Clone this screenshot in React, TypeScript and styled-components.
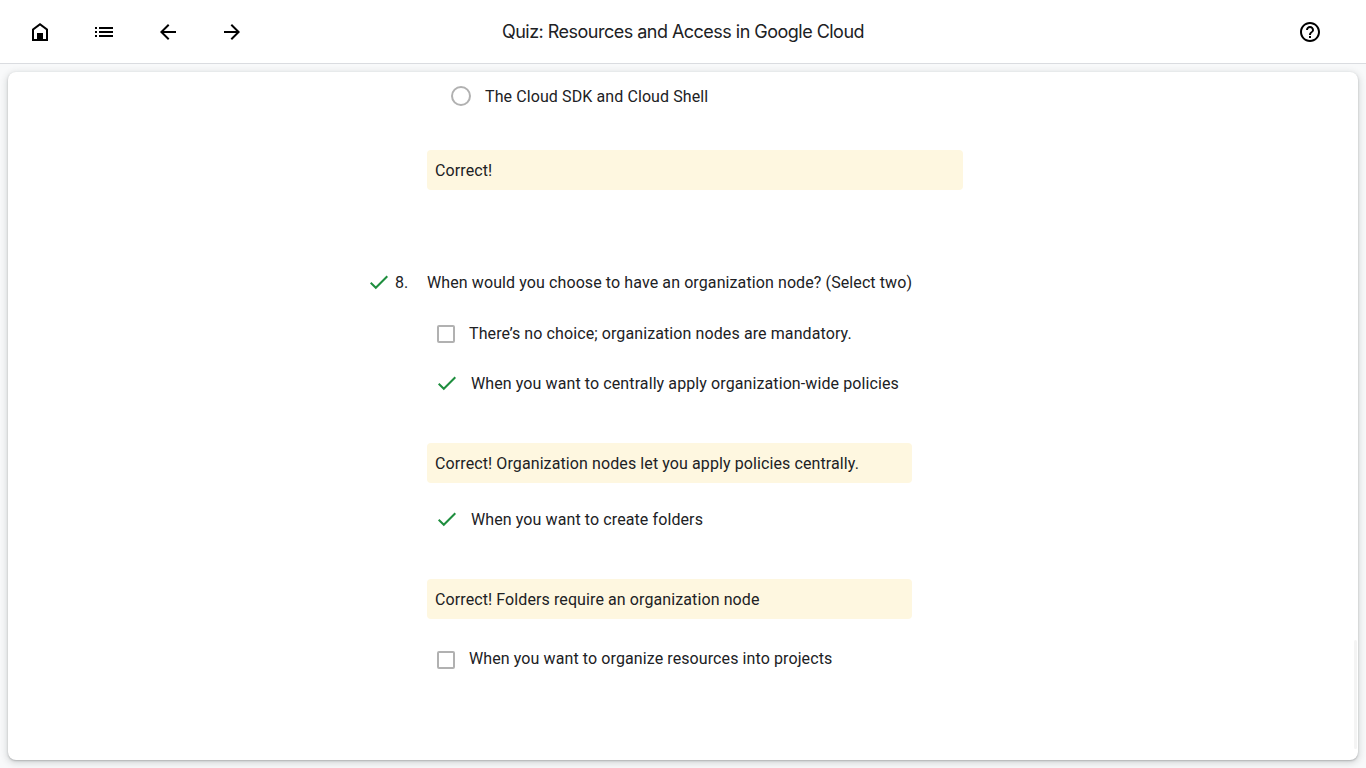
import React from "react";
import styled, { createGlobalStyle } from "styled-components";

const GlobalStyle = createGlobalStyle`
  * { box-sizing: border-box; }
  html, body, #root { height: 100%; }
  body {
    margin: 0;
    background: #f8f9fa;
    color: #202124;
    font-family: Roboto, "Liberation Sans", sans-serif;
    font-size: 16px;
    line-height: 24px;
    letter-spacing: 0.1px;
    overflow: hidden;
  }
`;

const Page = styled.div`
  display: flex;
  flex-direction: column;
  height: 100vh;
`;

const Header = styled.header`
  display: grid;
  grid-template-columns: 1fr auto 1fr;
  align-items: center;
  flex: none;
  height: 64px;
  padding: 0 32px 0 16px;
  background: #fff;
  border-bottom: 1px solid #dadce0;
`;

const Nav = styled.nav`
  display: flex;
  gap: 16px;
`;

const IconButton = styled.button<{ $end?: boolean }>`
  display: flex;
  align-items: center;
  justify-content: center;
  justify-self: ${(p) => (p.$end ? "end" : "auto")};
  width: 48px;
  height: 48px;
  padding: 0;
  margin-top: 1px;
  border: 0;
  background: none;
  color: #000;
`;

const Title = styled.h1`
  margin: 0 0 0 16px;
  font-family: Inter, Roboto, sans-serif;
  font-size: 18px;
  font-weight: 400;
  line-height: 24px;
  letter-spacing: -0.52px;
  white-space: nowrap;
`;

const Card = styled.main`
  display: flex;
  flex: 1;
  min-height: 0;
  margin: 8px;
  padding-left: 354px;
  border-radius: 8px;
  background: #fff;
  box-shadow: 0 1px 2px rgba(60, 64, 67, 0.3), 0 2px 6px 2px rgba(60, 64, 67, 0.15);
`;

const Questions = styled.div`
  flex: 1;
`;

const Question = styled.section<{ $gap?: number }>`
  display: grid;
  grid-template-columns: 33px 32px max-content;
  margin-top: ${(p) => p.$gap ?? 0}px;
`;

const Mark = styled.div`
  display: flex;
  padding-left: 8px;
`;

const Stem = styled.span`
  padding-top: 1px;
`;

const Body = styled.div<{ $width: number }>`
  grid-column: 3;
  width: ${(p) => p.$width}px;
`;

const Option = styled.label<{ $top: number; $indent: number; $gap: number }>`
  display: flex;
  align-items: center;
  gap: ${(p) => p.$gap}px;
  height: 24px;
  margin-top: ${(p) => p.$top}px;
  padding-left: ${(p) => p.$indent}px;
  white-space: nowrap;
`;

const OptionText = styled.span`
  padding-top: 2px;
`;

const Radio = styled.span`
  width: 20px;
  height: 20px;
  border: 2px solid #b1b1b1;
  border-radius: 50%;
`;

const Checkbox = styled.span<{ $drop?: number }>`
  width: 18px;
  height: 18px;
  margin-top: ${(p) => p.$drop ?? 2}px;
  border: 2px solid #b1b1b1;
  border-radius: 2px;
`;

const Feedback = styled.div<{ $top: number }>`
  height: 40px;
  margin-top: ${(p) => p.$top}px;
  padding: 9px 8px 7px;
  border-radius: 4px;
  background: #fef7e0;
`;

const Scrollbar = styled.div`
  align-self: flex-end;
  width: 3px;
  height: 109px;
  margin: 0 1px 11px 0;
  border-radius: 2px;
  background: #f4f4f4;
`;

const Icon = ({ d }: { d: string }) => (
  <svg width="24" height="24" viewBox="0 0 24 24" fill="currentColor" fillRule="evenodd" aria-hidden="true">
    <path d={d} />
  </svg>
);

const Check = () => (
  <svg width="18" height="24" viewBox="0 0 18 24" fill="none" stroke="#1e8e3e" strokeWidth="2" aria-hidden="true">
    <path d="M.7 12.7 5.8 17.8 17.3 6.3" />
  </svg>
);

const icons = {
  home: "M4 21V9l8-6 8 6v12zM6 19h3v-6h6v6h3v-9l-6-4.5L6 10z",
  list: "M3 7h2v2H3zM3 11h2v2H3zM3 15h2v2H3zM7 7h14v2H7zM7 11h14v2H7zM7 15h14v2H7z",
  back: "M20 11H7.83l5.59-5.59L12 4l-8 8 8 8 1.41-1.41L7.83 13H20z",
  forward: "M12 4l-1.41 1.41L16.17 11H4v2h12.17l-5.58 5.59L12 20l8-8z",
  help: "M11 18h2v-2h-2v2zm1-16C6.48 2 2 6.48 2 12s4.48 10 10 10 10-4.48 10-10S17.52 2 12 2zm0 18c-4.41 0-8-3.59-8-8s3.59-8 8-8 8 3.59 8 8-3.59 8-8 8zm0-14c-2.21 0-4 1.79-4 4h2c0-1.1.9-2 2-2s2 .9 2 2c0 2-3 1.75-3 5h2c0-2.25 3-2.5 3-5 0-2.21-1.79-4-4-4z",
};

export default function App() {
  return (
    <Page>
      <GlobalStyle />
      <Header>
        <Nav>
          <IconButton aria-label="Home"><Icon d={icons.home} /></IconButton>
          <IconButton aria-label="Contents"><Icon d={icons.list} /></IconButton>
          <IconButton aria-label="Previous"><Icon d={icons.back} /></IconButton>
          <IconButton aria-label="Next"><Icon d={icons.forward} /></IconButton>
        </Nav>
        <Title>Quiz: Resources and Access in Google Cloud</Title>
        <IconButton $end aria-label="Help"><Icon d={icons.help} /></IconButton>
      </Header>
      <Card>
        <Questions>
          <Question>
            <Body $width={536}>
              <Option $top={12} $indent={24} $gap={14}>
                <Radio />
                <OptionText>The Cloud SDK and Cloud Shell</OptionText>
              </Option>
              <Feedback $top={42}>Correct!</Feedback>
            </Body>
          </Question>
          <Question $gap={80}>
            <Mark><Check /></Mark>
            <Stem>8.</Stem>
            <Stem>When would you choose to have an organization node? (Select two)</Stem>
            <Body $width={485}>
              <Option $top={26} $indent={10} $gap={14}>
                <Checkbox />
                <OptionText>There’s no choice; organization nodes are mandatory.</OptionText>
              </Option>
              <Option $top={26} $indent={11} $gap={15}>
                <Check />
                <OptionText>When you want to centrally apply organization-wide policies</OptionText>
              </Option>
              <Feedback $top={48}>Correct! Organization nodes let you apply policies centrally.</Feedback>
              <Option $top={24} $indent={11} $gap={15}>
                <Check />
                <OptionText>When you want to create folders</OptionText>
              </Option>
              <Feedback $top={48}>Correct! Folders require an organization node</Feedback>
              <Option $top={27} $indent={10} $gap={14}>
                <Checkbox $drop={4} />
                <OptionText>When you want to organize resources into projects</OptionText>
              </Option>
            </Body>
          </Question>
        </Questions>
        <Scrollbar />
      </Card>
    </Page>
  );
}
